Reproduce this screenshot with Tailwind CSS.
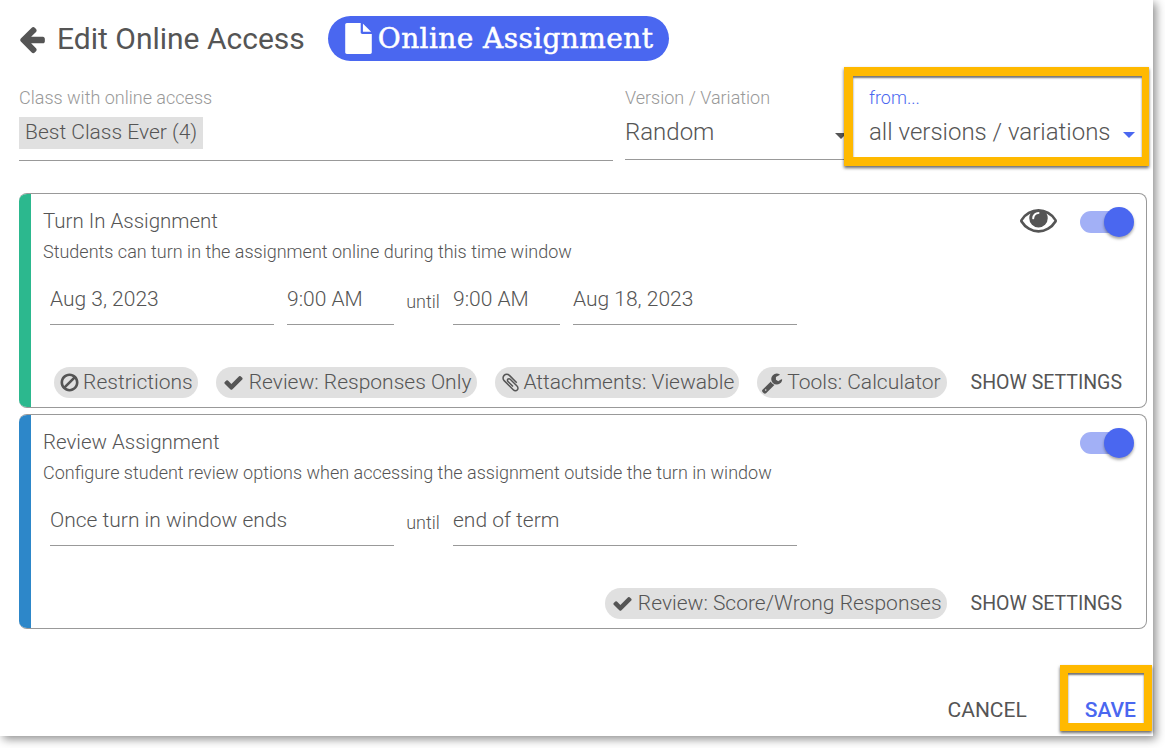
<!DOCTYPE html>
<html lang="en">
<head>
    <meta charset="UTF-8">
    <title>Edit Online Access</title>
    <script src="https://cdn.jsdelivr.net/npm/@tailwindcss/browser@4"></script>
</head>
<body class="bg-white w-[1165px] h-[748px] overflow-hidden font-['Roboto',sans-serif] text-[#555]">
    <div class="w-[1153px] h-[736px] bg-white shadow-[3px_3px_9px_rgba(0,0,0,0.45)] pl-[19px] pr-[6px] flex flex-col relative">
        <!-- Header -->
        <div class="flex items-center h-[45px] mt-[16px] shrink-0">
            <svg class="w-[30px] h-[30px] fill-[#555] -ml-[2px]" viewBox="0 0 1792 1792"><path d="M1664 896v128q0 53-32.5 90.5t-84.5 37.5h-704l293 294q38 36 38 90t-38 90l-75 76q-38 38-90 38-53 0-91-38l-651-652q-37-37-37-90 0-52 37-91l651-650q38-38 91-38 52 0 90 38l75 74q38 38 38 91t-38 91l-293 293h704q52 0 84.5 37.5t32.5 90.5z"/></svg>
            <h1 class="ml-[10px] text-[30px] leading-none font-normal">Edit Online Access</h1>
            <div class="ml-[23px] h-[45px] w-[341px] rounded-full bg-[#4a67f0] text-white flex items-center pl-[15px]">
                <svg class="w-[31px] h-[31px] fill-white" viewBox="0 0 1792 1792"><path d="M1152 512v-472q22 14 36 28l408 408q14 14 28 36h-472zm-128 32q0 40 28 68t68 28h544v1056q0 40-28 68t-68 28h-1344q-40 0-68-28t-28-68v-1600q0-40 28-68t68-28h800v544z"/></svg>
                <span class="ml-[4px] font-['DejaVu_Serif',serif] text-[28px] leading-none tracking-[0.4px] [-webkit-text-stroke:0.5px_white]">Online Assignment</span>
            </div>
        </div>

        <!-- Class / version row -->
        <div class="flex h-[85px] mt-[15px] shrink-0">
            <div class="w-[594px] border-b border-[#999] h-[85px]">
                <div class="text-[18px] leading-[20px] mt-[12px] text-[#999] font-light">Class with online access</div>
                <div class="inline-block mt-[9px] bg-[#e0e0e0] h-[32px] px-[6px] text-[21px] leading-[30px] font-light">Best Class Ever (4)</div>
            </div>
            <div class="ml-[12px] w-[220px] border-b border-[#999] h-[84px] relative">
                <div class="text-[18px] leading-[20px] mt-[12px] text-[#999] font-light">Version / Variation</div>
                <div class="mt-[9px] text-[24px] leading-[30px] font-light">Random</div>
                <div class="absolute right-[-2px] top-[57px] w-0 h-0 border-x-[6px] border-x-transparent border-t-[6px] border-t-[#555]"></div>
            </div>
            <div class="ml-[8px] w-[289px] h-[81px] relative bg-white pl-[16px]">
                <div class="text-[18px] leading-[20px] mt-[12px] text-[#4a67f0] font-light">from...</div>
                <div class="mt-[9px] text-[24px] leading-[30px] font-light whitespace-nowrap">all versions / variations</div>
                <div class="absolute right-[7px] top-[56px] w-0 h-0 border-x-[6px] border-x-transparent border-t-[6px] border-t-[#4a67f0]"></div>
                <!-- highlight -->
                <div class="absolute -top-[9px] -bottom-[9px] -left-[9px] -right-[7px] border-[9px] border-r-[7px] border-[#ffb900] shadow-[0_2px_3px_rgba(0,0,0,0.6),inset_0_2px_2px_rgba(0,0,0,0.55)]"></div>
            </div>
        </div>

        <!-- Turn in card -->
        <div class="mt-[32px] w-[1128px] h-[215px] shrink-0 border border-[#999] border-l-0 rounded-[8px] overflow-hidden flex">
            <div class="w-[12px] bg-[#2cb88e] shrink-0"></div>
            <div class="flex-1 pl-[12px] relative">
                <div class="flex items-start justify-between h-[28px] mt-[13px]">
                    <div class="text-[20.5px] leading-[28px] font-light">Turn In Assignment</div>
                    <div class="flex items-start mr-[12px]">
                        <svg class="w-[37px] h-[37px] -mt-[6px] fill-[#555]" viewBox="0 0 1792 1792"><path d="M1664 960q-152-236-381-353 61 104 61 225 0 185-131.5 316.5t-316.5 131.5-316.5-131.5-131.5-316.5q0-121 61-225-229 117-381 353 133 205 333.5 326.5t434.5 121.5 434.5-121.5 333.5-326.5zm-720-384q0-20-14-34t-34-14q-125 0-214.5 89.5t-89.5 214.5q0 20 14 34t34 14 34-14 14-34q0-86 61-147t147-61q20 0 34-14t14-34zm848 384q0 34-20 69-140 230-376.5 368.5t-499.5 138.5-499.5-139-376.5-368q-20-35-20-69t20-69q140-229 376.5-368t499.5-139 499.5 139 376.5 368q20 35 20 69z"/></svg>
                        <div class="ml-[23px] w-[54px] h-[30px] relative">
                            <div class="absolute left-0 top-[4px] w-[48px] h-[22px] rounded-full bg-[#a2b0f6]"></div>
                            <div class="absolute right-0 top-0 w-[30px] h-[30px] rounded-full bg-[#4a67f0] shadow-[0_2px_3px_rgba(0,0,0,0.35)]"></div>
                        </div>
                    </div>
                </div>
                <div class="text-[18px] leading-[22px] mt-[6px] font-light">Students can turn in the assignment online during this time window</div>
                <div class="flex items-end h-[48px] mt-[14px] ml-[7px] text-[21px] font-light">
                    <div class="w-[224px] h-[50px] border-b border-[#999] leading-[48px]">Aug 3, 2023</div>
                    <div class="ml-[13px] w-[107px] h-[50px] border-b border-[#999] leading-[48px]">9:00 AM</div>
                    <div class="w-[59px] h-[50px] text-center text-[18px] leading-[54px] pr-[1px]">until</div>
                    <div class="w-[107px] h-[50px] border-b border-[#999] leading-[48px]">9:00 AM</div>
                    <div class="ml-[13px] w-[224px] h-[50px] border-b border-[#999] leading-[48px]">Aug 18, 2023</div>
                </div>
                <div class="flex items-center justify-end h-[31px] mt-[42px] pr-[24px] text-[21px] font-light">
                    <div class="h-[31px] rounded-full bg-[#e0e0e0] flex items-center pl-[5px] pr-[5px]">
                        <svg class="w-[21px] h-[21px] fill-[#555]" viewBox="0 0 1792 1792"><path d="M1440 893q0-161-87-295l-754 753q137 89 297 89 111 0 211.5-43.5t173.5-116.5 116-174.5 43-212.5zm-999 299l755-754q-135-91-300-91-148 0-273 73t-198 199-73 274q0 162 89 299zm1223-299q0 157-61 300t-163.5 246-245 164-298.5 61-298.5-61-245-164-163.5-246-61-300 61-299.5 163.5-245.5 245-164 298.5-61 298.5 61 245 164 163.5 245.5 61 299.5z"/></svg>
                        <span class="ml-[3px]">Restrictions</span>
                    </div>
                    <div class="ml-[18px] h-[31px] rounded-full bg-[#e0e0e0] flex items-center pl-[7px] pr-[6px]">
                        <svg class="w-[21px] h-[21px] fill-[#555]" viewBox="0 0 1792 1792"><path d="M1671 566q0 40-28 68l-724 724-136 136q-28 28-68 28t-68-28l-136-136-362-362q-28-28-28-68t28-68l136-136q28-28 68-28t68 28l294 295 656-657q28-28 68-28t68 28l136 136q28 28 28 68z"/></svg>
                        <span class="ml-[5px]">Review: Responses Only</span>
                    </div>
                    <div class="ml-[18px] h-[31px] rounded-full bg-[#e0e0e0] flex items-center pl-[5px] pr-[5px]">
                        <svg class="w-[21px] h-[21px] fill-[#555]" viewBox="0 0 1792 1792"><path d="M1596 1385q0 117-79 196t-196 79q-135 0-235-100l-777-776q-113-115-113-271 0-159 110-270t269-111q158 0 273 113l605 606q10 10 10 22 0 16-30.5 46.5t-46.5 30.5q-13 0-23-10l-606-607q-79-77-181-77-106 0-179 75t-73 181q0 105 76 181l776 777q63 63 145 63 64 0 106-42t42-106q0-82-63-145l-581-581q-26-24-60-24-29 0-48 19t-19 48q0 32 25 59l410 410q10 10 10 22 0 16-31 47t-47 31q-12 0-22-10l-410-410q-63-61-63-149 0-82 57-139t139-57q88 0 149 63l581 581q100 98 100 235z"/></svg>
                        <span class="ml-[2px]">Attachments: Viewable</span>
                    </div>
                    <div class="ml-[18px] h-[31px] rounded-full bg-[#e0e0e0] flex items-center pl-[4px] pr-[6px]">
                        <svg class="w-[22px] h-[22px] fill-[#555]" viewBox="0 0 1792 1792"><path d="M448 1472q0-26-19-45t-45-19-45 19-19 45 19 45 45 19 45-19 19-45zm644-420l-682 682q-37 37-90 37-52 0-91-37l-106-108q-38-36-38-90 0-53 38-91l681-681q39 98 114.5 173.5t173.5 114.5zm634-435q0 39-23 106-47 134-164.5 217.5t-258.5 83.5q-185 0-316.5-131.5t-131.5-316.5 131.5-316.5 316.5-131.5q58 0 121.5 16.5t107.5 46.5q16 11 16 28t-16 28l-293 169v224l193 107q5-3 79-48.5t135.5-81 70.5-35.5q15 0 23.5 10t8.5 25z"/></svg>
                        <span class="ml-[4px]">Tools: Calculator</span>
                    </div>
                    <div class="ml-[24px] text-[19.5px] font-normal">SHOW SETTINGS</div>
                </div>
            </div>
        </div>

        <!-- Review card -->
        <div class="mt-[6px] w-[1128px] h-[215px] shrink-0 border border-[#999] border-l-0 rounded-[8px] overflow-hidden flex">
            <div class="w-[12px] bg-[#2d87c9] shrink-0"></div>
            <div class="flex-1 pl-[12px] relative">
                <div class="flex items-start justify-between h-[28px] mt-[13px]">
                    <div class="text-[20.5px] leading-[28px] font-light">Review Assignment</div>
                    <div class="flex items-start mr-[12px]">
                        <div class="w-[54px] h-[30px] relative">
                            <div class="absolute left-0 top-[4px] w-[48px] h-[22px] rounded-full bg-[#a2b0f6]"></div>
                            <div class="absolute right-0 top-0 w-[30px] h-[30px] rounded-full bg-[#4a67f0] shadow-[0_2px_3px_rgba(0,0,0,0.35)]"></div>
                        </div>
                    </div>
                </div>
                <div class="text-[18px] leading-[22px] mt-[6px] font-light">Configure student review options when accessing the assignment outside the turn in window</div>
                <div class="flex items-end h-[48px] mt-[14px] ml-[7px] text-[21px] font-light">
                    <div class="w-[344px] h-[50px] border-b border-[#999] leading-[48px]">Once turn in window ends</div>
                    <div class="w-[59px] h-[50px] text-center text-[18px] leading-[54px] pr-[1px]">until</div>
                    <div class="w-[344px] h-[50px] border-b border-[#999] leading-[48px]">end of term</div>
                </div>
                <div class="flex items-center justify-end h-[31px] mt-[42px] pr-[24px] text-[21px] font-light">
                    <div class="h-[31px] rounded-full bg-[#e0e0e0] flex items-center pl-[7px] pr-[5px]">
                        <svg class="w-[21px] h-[21px] fill-[#555]" viewBox="0 0 1792 1792"><path d="M1671 566q0 40-28 68l-724 724-136 136q-28 28-68 28t-68-28l-136-136-362-362q-28-28-28-68t28-68l136-136q28-28 68-28t68 28l294 295 656-657q28-28 68-28t68 28l136 136q28 28 28 68z"/></svg>
                        <span class="ml-[5px]">Review: Score/Wrong Responses</span>
                    </div>
                    <div class="ml-[24px] text-[19.5px] font-normal">SHOW SETTINGS</div>
                </div>
            </div>
        </div>

        <!-- Footer -->
        <div class="flex-1 flex justify-end items-start pt-[69px] pr-[11px]">
            <button class="text-[21px] leading-[24px] font-normal">CANCEL</button>
            <button class="ml-[58px] text-[21px] leading-[24px] font-medium text-[#4a67f0] relative">
                SAVE
                <span class="absolute left-[-25px] right-[-16px] top-[-33px] bottom-[-9px] border-[8px] border-[#ffb900] shadow-[0_2px_3px_rgba(0,0,0,0.6),inset_0_2px_2px_rgba(0,0,0,0.55)]"></span>
            </button>
        </div>
    </div>
</body>
</html>
